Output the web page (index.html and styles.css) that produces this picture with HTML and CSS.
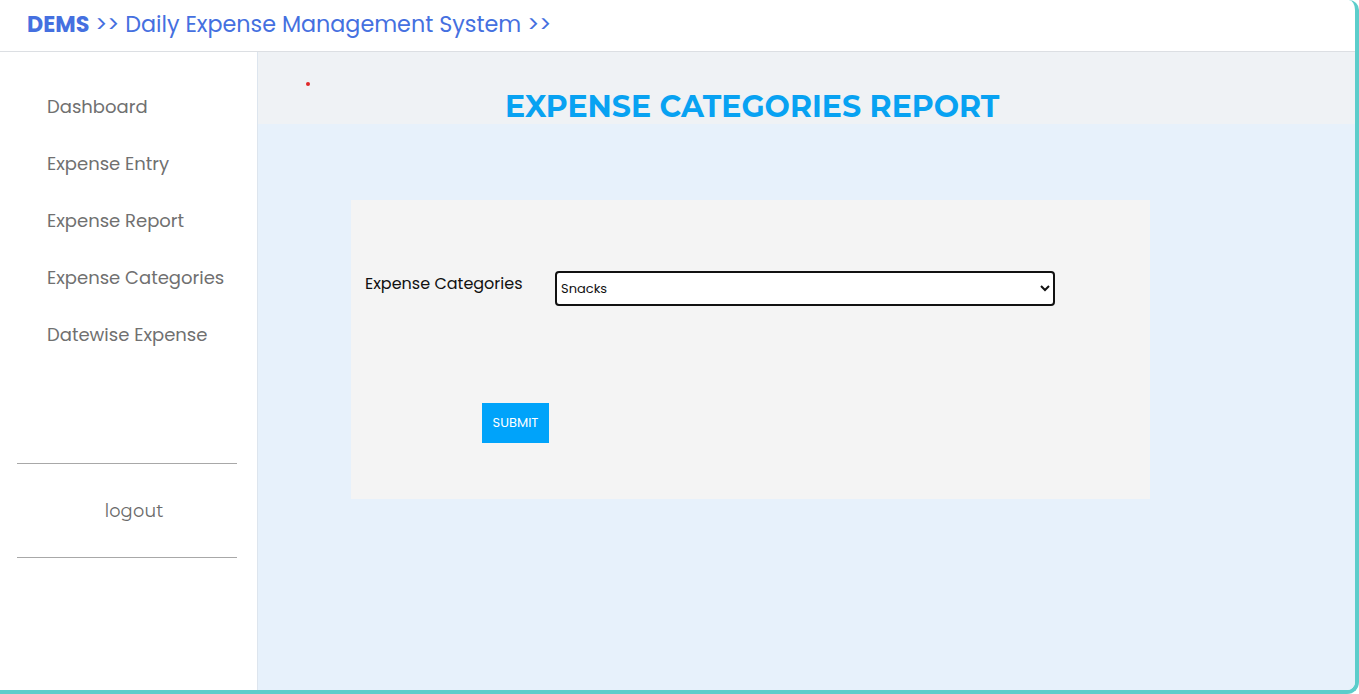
FILE: index.html
```html
<!DOCTYPE html>
<html lang="en">
<head>
<meta charset="utf-8">
<title>DEMS - Expense Categories Report</title>
<link rel="stylesheet" href="styles.css">
</head>
<body>
<div class="app">
  <header class="topbar">
    <span class="brand">DEMS</span><span class="crumb"> &gt;&gt; Daily Expense Management System &gt;&gt;</span>
  </header>
  <div class="layout">
    <aside class="sidebar">
      <nav class="menu">
        <a class="menu-item" href="#">Dashboard</a>
        <a class="menu-item" href="#">Expense Entry</a>
        <a class="menu-item" href="#">Expense Report</a>
        <a class="menu-item" href="#">Expense Categories</a>
        <a class="menu-item" href="#">Datewise Expense</a>
      </nav>
      <div class="logout-box">
        <a class="logout" href="#">logout</a>
      </div>
    </aside>
    <main class="main">
      <div class="title-band">
        <span class="dot"></span>
        <h1 class="page-title">EXPENSE CATEGORIES REPORT</h1>
      </div>
      <div class="content">
        <form class="card">
          <div class="field">
            <label class="field-label" for="cat">Expense Categories</label>
            <select class="field-select" id="cat">
              <option>Snacks</option>
              <option>Food</option>
              <option>Travel</option>
            </select>
          </div>
          <div class="actions">
            <button class="submit" type="button">SUBMIT</button>
          </div>
        </form>
      </div>
    </main>
  </div>
</div>
</body>
</html>
```
FILE: styles.css
```css
* { box-sizing: border-box; }
html, body { margin: 0; padding: 0; }
body {
  font-family: "Poppins", "Open Sans", "Liberation Sans", sans-serif;
  background: #ffffff;
}
.app {
  width: 1359px;
  height: 694px;
  display: flex;
  flex-direction: column;
  border-right: 4px solid #5ccdcb;
  border-bottom: 4px solid #5ccdcb;
  border-radius: 0 10px 12px 0;
  overflow: hidden;
  background: #fff;
}
.topbar {
  height: 52px;
  flex: none;
  border-bottom: 1px solid #dcdfe3;
  padding: 9px 0 0 27px;
  color: #4570e0;
  font-size: 22.25px;
  line-height: 32px;
  white-space: nowrap;
}
.brand { font-weight: 700; }
.crumb { font-weight: 400; }
.layout {
  flex: 1;
  display: flex;
  min-height: 0;
}
.sidebar {
  width: 258px;
  flex: none;
  border-right: 1px solid #dde5ee;
  padding-top: 41px;
  display: flex;
  flex-direction: column;
}
.menu {
  display: flex;
  flex-direction: column;
  gap: 29px;
  padding-left: 47px;
}
.menu-item {
  color: #707070;
  text-decoration: none;
  font-size: 18px;
  line-height: 28px;
}
.logout-box {
  margin: 114px 20px 0 17px;
  border-top: 1px solid #a8a8a8;
  border-bottom: 1px solid #a8a8a8;
  height: 95px;
  display: flex;
  align-items: center;
  justify-content: center;
}
.logout {
  color: #6a6a6a;
  text-decoration: none;
  font-size: 18px;
  font-family: "Montserrat", "Open Sans", sans-serif;
  margin-left: 14px;
}
.main {
  flex: 1;
  display: flex;
  flex-direction: column;
  min-width: 0;
}
.title-band {
  height: 72px;
  flex: none;
  background: #eff2f5;
  padding: 30px 0 0 48px;
}
.dot {
  display: block;
  width: 4px;
  height: 4px;
  border-radius: 50%;
  background: #e02828;
}
.page-title {
  margin: 2px 0 0 199px;
  font-family: "Montserrat", "Inter", "Open Sans", sans-serif;
  font-weight: 700;
  font-size: 30px;
  line-height: 38px;
  color: #08a2f2;
  letter-spacing: 0;
  white-space: nowrap;
}
.content {
  flex: 1;
  background: #e7f1fb;
  padding: 76px 0 0 93px;
}
.card {
  width: 799px;
  height: 299px;
  background: #f4f4f4;
  padding: 71px 0 0 14px;
  margin: 0;
}
.field {
  display: flex;
  align-items: flex-start;
}
.field-label {
  width: 190px;
  flex: none;
  font-size: 16px;
  line-height: 24px;
  color: #111;
  padding-top: 1px;
}
.field-select {
  width: 500px;
  height: 35px;
  border: 2px solid #111;
  border-radius: 4px;
  background: #fff;
  font-family: "Poppins", "Open Sans", sans-serif;
  font-size: 13px;
  color: #111;
  padding: 0;
}
.actions {
  padding: 97px 0 0 117px;
}
.submit {
  width: 67px;
  height: 40px;
  border: none;
  background: #00a3fa;
  color: #fff;
  font-family: "Poppins", "Open Sans", sans-serif;
  font-size: 13px;
  padding: 0;
}
```
